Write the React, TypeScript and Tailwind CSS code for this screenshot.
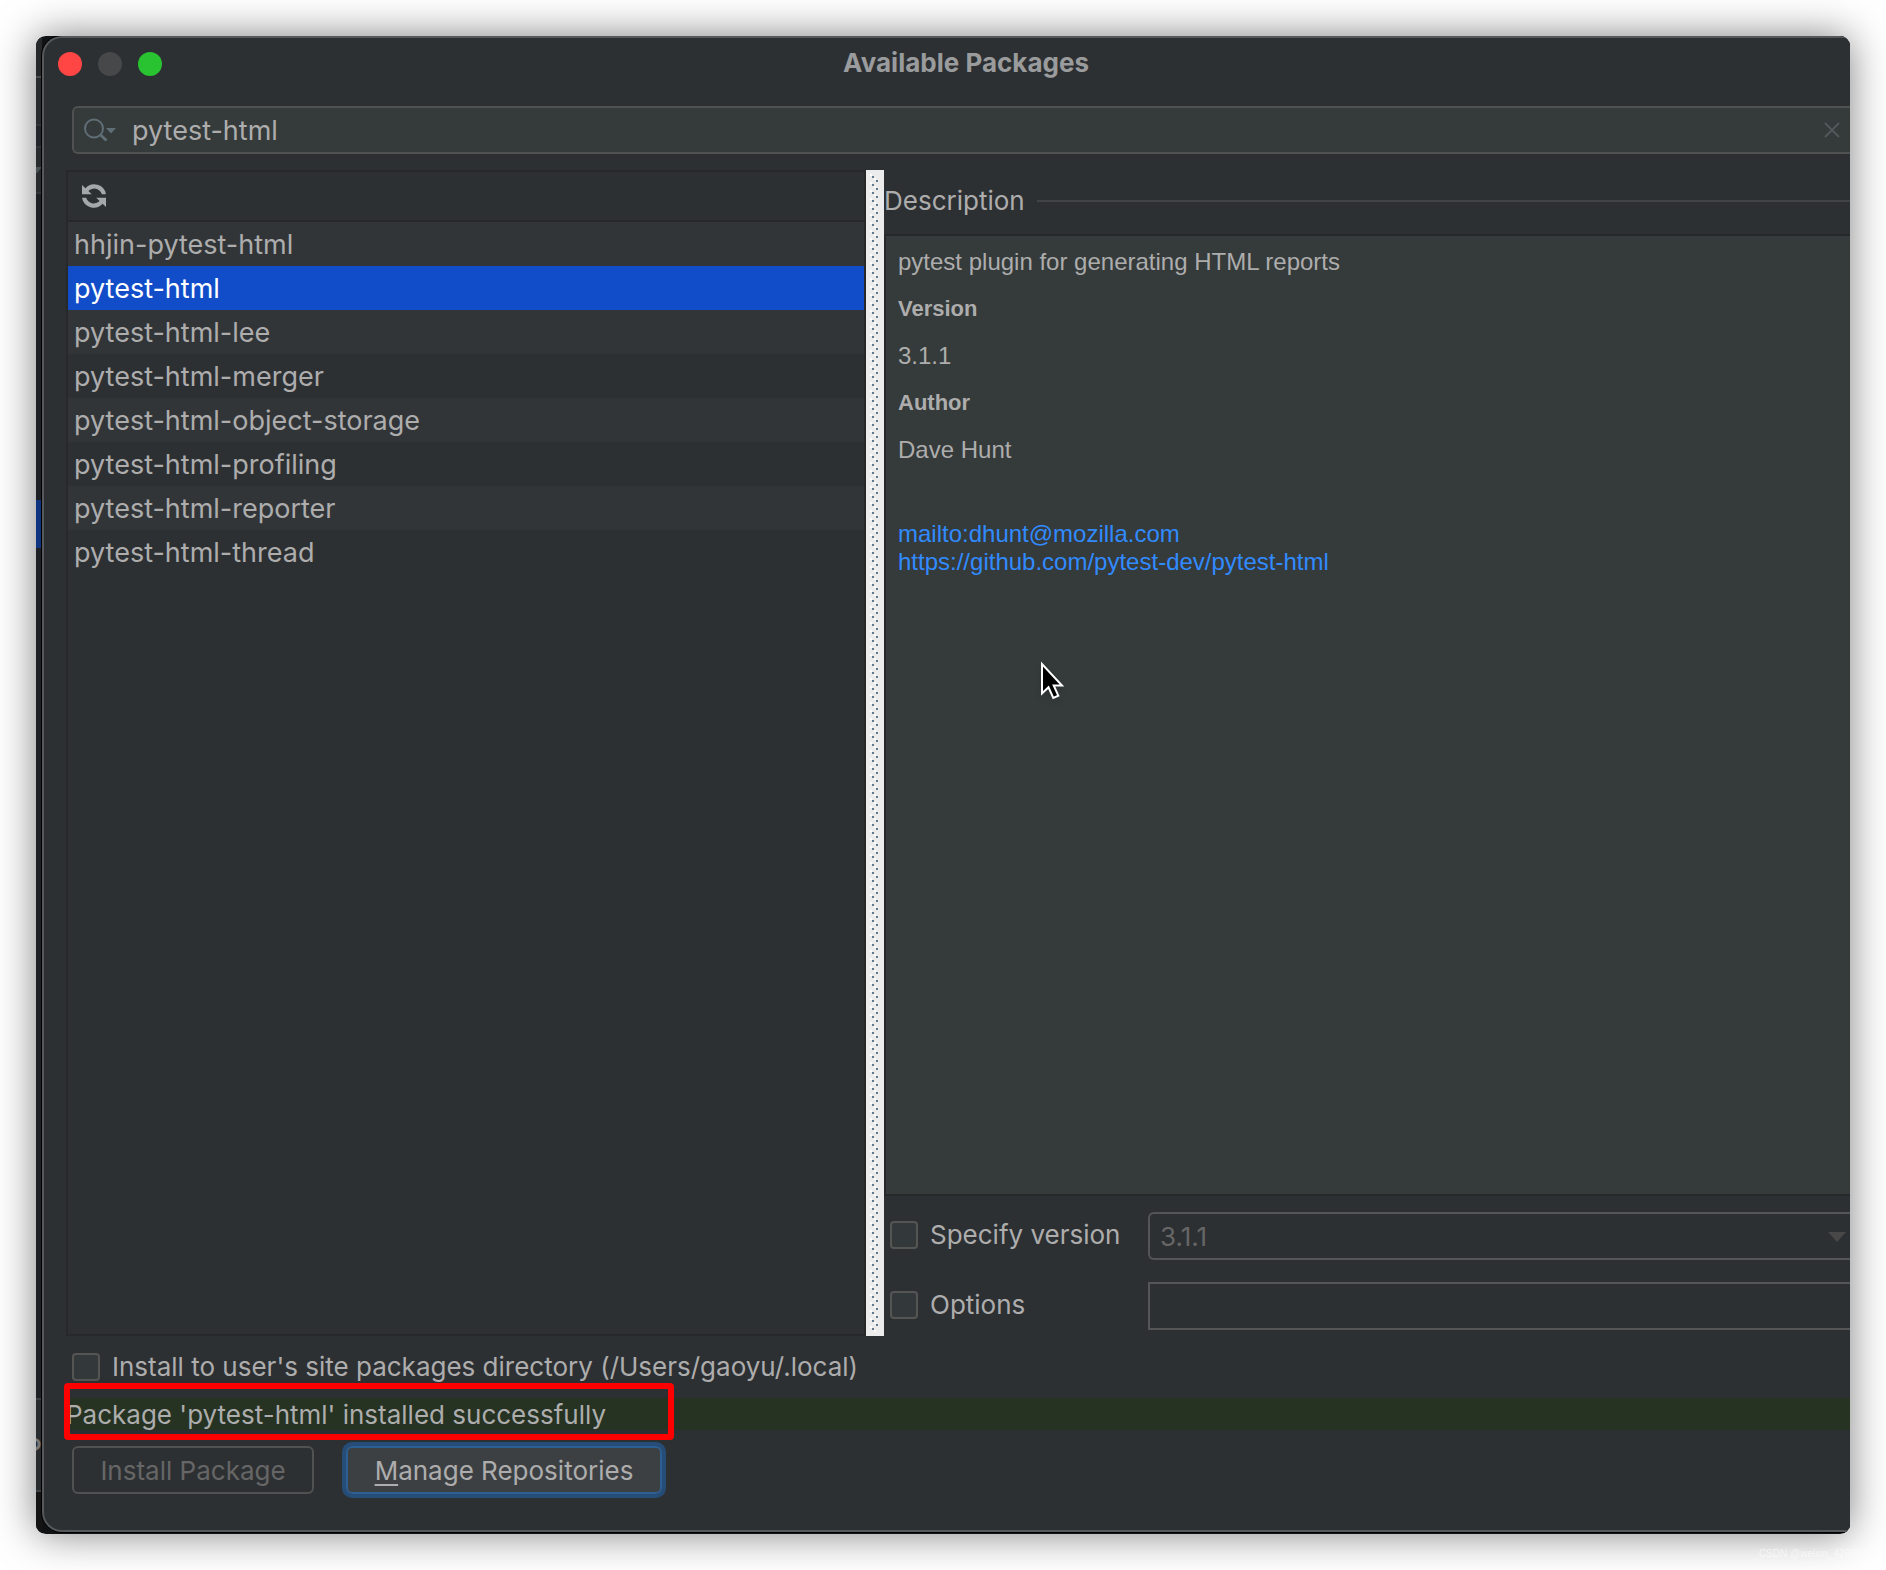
import React, { useState } from "react";

const packages = [
  "hhjin-pytest-html",
  "pytest-html",
  "pytest-html-lee",
  "pytest-html-merger",
  "pytest-html-object-storage",
  "pytest-html-profiling",
  "pytest-html-reporter",
  "pytest-html-thread",
];

function SearchIcon() {
  return (
    <svg width="32" height="24" viewBox="0 0 32 24" fill="none" aria-hidden="true">
      <circle cx="10" cy="10.5" r="9" stroke="#5f6e76" strokeWidth="2" />
      <path d="M16 16.5l6.5 6" stroke="#5f6e76" strokeWidth="3" />
      <path d="M22 10h10l-5 5.5z" fill="#5f6e76" />
    </svg>
  );
}

function RefreshIcon() {
  return (
    <svg width="24" height="24" viewBox="0 0 24 24" aria-hidden="true">
      <path
        fill="#a4a8ab"
        d="M0 1l3.4 3.2A12 12 0 0 1 24 10.2h-4.2A8 8 0 0 0 6.4 7l3.4 3.2H0z"
      />
      <path
        fill="#a4a8ab"
        d="M24 23l-3.4-3.2A12 12 0 0 1 0 13.8h4.2A8 8 0 0 0 17.6 17l-3.4-3.2H24z"
      />
    </svg>
  );
}

function Cursor() {
  return (
    <svg
      className="absolute left-[154px] top-[425px] drop-shadow-md"
      width="26"
      height="40"
      viewBox="0 0 26 40"
      aria-hidden="true"
    >
      <path
        d="M2 3v29.5l6.5-6.2 4.8 10.6 5-2.2-4.6-10.2H22z"
        fill="#000"
        stroke="#fff"
        strokeWidth="2"
      />
    </svg>
  );
}

function Checkbox({ id, label }: { id: string; label: string }) {
  return (
    <div className="flex items-center gap-3 pb-0.5">
      <input
        id={id}
        type="checkbox"
        className="size-7 shrink-0 appearance-none rounded border-2 border-[#555654] bg-[#33393b] checked:bg-[#114dc8]"
      />
      <label htmlFor={id} className="whitespace-nowrap">
        {label}
      </label>
    </div>
  );
}

function BackgroundStrip() {
  return (
    <div className="flex w-1.5 shrink-0 flex-col overflow-hidden bg-[#1d2025]" aria-hidden="true">
      <div className="h-[42px] border-b-2 border-[#4b4d4f] bg-[#26282a]" />
      <div className="h-12 border-b-2 border-[#333536] bg-[#292c2e]" />
      <div className="h-[22px] border-b-2 border-[#333536] bg-[#22262c]" />
      <div className="flex h-[46px] items-center border-b-2 border-[#333536] bg-[#292c2e]">
        <svg width="6" height="6" viewBox="0 0 6 6">
          <path d="M0 0h6L1 6H0z" fill="#4a5356" />
        </svg>
      </div>
      <div className="h-[306px]" />
      <div className="h-12 bg-[#10337f]" />
      <div className="flex-1" />
      <div className="flex h-[94px] items-center justify-end border-y-2 border-[#3d3f40] bg-[#292c2e] pt-3 text-[32px] text-[#777]">
        ?
      </div>
      <div className="h-[42px] bg-[#141414]" />
    </div>
  );
}

export default function App() {
  const [query, setQuery] = useState("pytest-html");
  const [selected, setSelected] = useState("pytest-html");

  return (
    <div className="relative flex min-h-screen bg-white p-9 font-['Inter',sans-serif] text-[26px] leading-8 text-[#adadad]">
      <div className="flex min-w-0 flex-1 overflow-hidden rounded-[10px] bg-[#111213] shadow-[0_0_40px_rgba(0,0,0,0.5)]">
        <BackgroundStrip />
        <main className="mb-0.5 flex min-w-0 flex-1 flex-col rounded-l-[20px] border-y-2 border-l-2 border-[#56595b] bg-[#2d3033] shadow-[0_0_0_1px_#000]">
          <header className="flex h-[52px] items-center">
            <div className="flex flex-1 gap-4 pl-3.5">
              <button aria-label="Close" className="size-6 rounded-full bg-[#ff4645]" />
              <button aria-label="Minimize" className="size-6 rounded-full bg-[#464849]" />
              <button aria-label="Zoom" className="size-6 rounded-full bg-[#29c332]" />
            </div>
            <h1 className="pb-0.5 pl-6 text-[26px] font-bold leading-8 text-[#9a9b9c]">
              Available Packages
            </h1>
            <div className="flex-1" />
          </header>

          <div className="ml-7 mt-4 flex h-12 items-center rounded-l-md border-y-2 border-l-2 border-[#505151] bg-[#353a3a] pl-2.5 pr-2">
            <SearchIcon />
            <input
              type="text"
              aria-label="Search packages"
              value={query}
              onChange={(e) => setQuery(e.target.value)}
              className="ml-4 min-w-0 flex-1 bg-transparent pt-0.5 text-[27px] outline-none"
            />
            <button aria-label="Clear search">
              <svg width="20" height="20" viewBox="0 0 20 20" aria-hidden="true">
                <path d="M3 3l14 14M17 3L3 17" stroke="#50585c" strokeWidth="2" />
              </svg>
            </button>
          </div>

          <div className="ml-[22px] mt-4 flex flex-1">
            <section className="flex w-[800px] shrink-0 flex-col border-2 border-[#272829]">
              <div className="flex h-[50px] items-center border-b-2 border-[#272829] pl-3.5">
                <button aria-label="Reload package list">
                  <RefreshIcon />
                </button>
              </div>
              <ul className="text-[27px]">
                {packages.map((name) => (
                  <li key={name} className="odd:bg-[#323538]">
                    <button
                      onClick={() => setSelected(name)}
                      className={
                        name === selected
                          ? "block h-11 w-full bg-[#114dc8] px-1.5 pt-0.5 text-left text-white"
                          : "block h-11 w-full px-1.5 pt-0.5 text-left"
                      }
                    >
                      {name}
                    </button>
                  </li>
                ))}
              </ul>
            </section>

            <div className="w-[18px] shrink-0 bg-[#ececec] px-1 py-1">
              <svg width="10" height="100%" aria-hidden="true">
                <defs>
                  <pattern id="grip" width="10" height="8" patternUnits="userSpaceOnUse">
                    <path d="M0 0h2v2H0zM4 4h2v2H4z" fill="#fff" />
                    <path d="M2 2h2v2H2zM6 6h2v2H6z" fill="#64798c" />
                  </pattern>
                </defs>
                <rect width="10" height="100%" fill="url(#grip)" />
              </svg>
            </div>

            <section className="flex min-w-0 flex-1 flex-col">
              <div className="flex h-16 items-center gap-3 pb-0.5">
                <h2>Description</h2>
                <div className="h-0.5 flex-1 bg-[#414344]" />
              </div>
              <div className="relative flex-1 border-y-2 border-l-2 border-[#272829] bg-[#353a3a] px-3 pt-3 font-['Liberation_Sans',sans-serif] text-2xl leading-7">
                <p>pytest plugin for generating HTML reports</p>
                <h3 className="mt-[19px] text-[22px] font-bold leading-7">Version</h3>
                <p className="mt-[19px]">3.1.1</p>
                <h3 className="mt-[19px] text-[22px] font-bold leading-7">Author</h3>
                <p className="mt-[19px]">Dave Hunt</p>
                <div className="mt-14 flex flex-col items-start text-[#318bff]">
                  <a href="mailto:dhunt@mozilla.com">mailto:dhunt@mozilla.com</a>
                  <a href="https://github.com/pytest-dev/pytest-html">
                    https://github.com/pytest-dev/pytest-html
                  </a>
                </div>
                <Cursor />
              </div>
              <div className="grid grid-cols-[258px_1fr] items-center gap-y-[22px] pb-1.5 pl-1.5 pt-4">
                <Checkbox id="specify-version" label="Specify version" />
                <div className="relative">
                  <select
                    disabled
                    aria-label="Version"
                    className="block h-12 w-full appearance-none rounded-l-md border-y-2 border-l-2 border-[#555] px-2.5 pt-0.5 text-[#666] opacity-100"
                  >
                    <option>3.1.1</option>
                  </select>
                  <svg
                    className="pointer-events-none absolute right-1 top-5"
                    width="18"
                    height="10"
                    viewBox="0 0 18 10"
                    aria-hidden="true"
                  >
                    <path d="M0 0h18l-9 10z" fill="#484848" />
                  </svg>
                </div>
                <Checkbox id="options" label="Options" />
                <input
                  type="text"
                  aria-label="Options value"
                  className="h-12 w-full border-y-2 border-l-2 border-[#555] bg-transparent px-2.5 outline-none"
                />
              </div>
            </section>
          </div>

          <div className="ml-7 mt-3.5 flex h-9 items-center">
            <Checkbox
              id="user-site"
              label="Install to user's site packages directory (/Users/gaoyu/.local)"
            />
          </div>

          <div className="relative ml-[22px] mt-3 bg-[#263222]">
            <p role="status" className="pt-0.5 leading-[30px]">
              Package 'pytest-html' installed successfully
            </p>
            <div className="absolute -left-0.5 -top-[15px] h-[57px] w-[610px] rounded-sm border-6 border-[#fe0000]" />
          </div>

          <div className="mb-8 ml-7 mt-3 flex items-center gap-7">
            <button
              disabled
              className="h-12 w-[242px] rounded-md border-2 border-[#505151] pt-0.5 text-[#666]"
            >
              Install Package
            </button>
            <button className="h-14 w-[324px] rounded-[10px] border-4 border-[#254d78] bg-[#3d4043] pt-0.5 shadow-[inset_0_0_0_2px_#2d5f93]">
              <span className="underline decoration-2 underline-offset-4">M</span>anage Repositories
            </button>
          </div>
        </main>
      </div>
      <p className="absolute bottom-2 right-2 font-['Liberation_Sans',sans-serif] text-[10px] leading-4 text-white/60">
        CSDN @weixin_42693712
      </p>
    </div>
  );
}
